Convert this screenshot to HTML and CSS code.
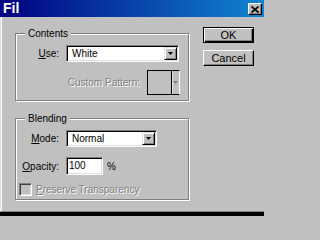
FILE: index.html
```html
<!DOCTYPE html>
<html>
<head>
<meta charset="utf-8">
<link rel="stylesheet" href="styles.css">
</head>
<body>
<div class="window">
  <div class="titlebar">
    <span class="title">Fil</span>
    <span class="close"><svg width="8" height="7" viewBox="0 0 8 7"><path d="M0.5 0.5L7.5 6.5M7.5 0.5L0.5 6.5" stroke="#000" stroke-width="1.7" fill="none"/></svg></span>
  </div>
  <div class="client">
    <div class="groups">
      <section class="group contents">
        <span class="legend">Contents</span>
        <div class="field-row">
          <span class="lbl"><u>U</u>se:</span>
          <div class="combo combo-use">
            <span class="val">White</span>
            <span class="drop"><svg width="5" height="3" viewBox="0 0 5 3"><path d="M0 0H5L2.5 3Z" fill="#000"/></svg></span>
          </div>
        </div>
        <div class="pattern-row">
          <span class="disabled">Custom Pattern:</span>
          <div class="pattern">
            <span class="swatch"></span>
            <span class="pdrop"><svg width="5" height="3" viewBox="0 0 5 3"><path d="M0 0H5L2.5 3Z" fill="#808080"/></svg></span>
          </div>
        </div>
      </section>
      <section class="group blending">
        <span class="legend">Blending</span>
        <div class="field-row">
          <span class="lbl"><u>M</u>ode:</span>
          <div class="combo combo-mode">
            <span class="val">Normal</span>
            <span class="drop"><svg width="5" height="3" viewBox="0 0 5 3"><path d="M0 0H5L2.5 3Z" fill="#000"/></svg></span>
          </div>
        </div>
        <div class="field-row opacity-row">
          <span class="lbl"><u>O</u>pacity:</span>
          <div class="textbox">100</div>
          <span class="pct">%</span>
        </div>
        <div class="check-row">
          <span class="checkbox"></span>
          <span class="disabled"><u>P</u>reserve Transparency</span>
        </div>
      </section>
    </div>
    <div class="buttons">
      <div class="btn default">OK</div>
      <div class="btn">Cancel</div>
    </div>
  </div>
</div>
</body>
</html>
```

FILE: styles.css
```css
* { box-sizing: border-box; }
html, body { margin: 0; padding: 0; }
body {
  background: #c0c0c0;
  font-family: "Liberation Sans", Arial, sans-serif;
  font-size: 10px;
  color: #000;
  width: 264px;
  height: 216px;
  overflow: hidden;
}
.window {
  width: 264px;
  height: 216px;
  display: flex;
  flex-direction: column;
  border-bottom: 4px solid #000;
}
.titlebar {
  flex: none;
  height: 17px;
  display: flex;
  align-items: center;
  padding: 0 2px 0 3px;
  background: linear-gradient(to right, #000080, #1084d0);
}
.title {
  flex: 1;
  color: #fff;
  font-weight: bold;
  font-size: 14px;
  line-height: 17px;
}
.close {
  width: 14px;
  height: 12px;
  margin-top: 1px;
  display: flex;
  align-items: center;
  justify-content: center;
  background: #c0c0c0;
  border: 1px solid;
  border-color: #fff #000 #000 #fff;
  box-shadow: inset -1px -1px #808080;
}
.client {
  flex: 1;
  display: flex;
  align-items: flex-start;
  padding: 10px 0 0 14px;
  border-left: 1px solid #dfdfdf;
  border-bottom: 1px solid #808080;
  box-shadow: inset 1px 0 #fff;
}
.groups {
  width: 175px;
  padding-top: 6px;
  display: flex;
  flex-direction: column;
  gap: 17px;
}
.group {
  position: relative;
  width: 174px;
  border: 1px solid #808080;
  box-shadow: inset 1px 1px #fff, 1px 1px #fff;
}
.legend {
  position: absolute;
  top: -7px;
  left: 9px;
  padding: 0 3px;
  line-height: 13px;
  background: #c0c0c0;
}
.contents { height: 68px; padding: 11px 8px 0 0; }
.blending { height: 82px; padding: 11px 0 0 0; }
.field-row {
  display: flex;
  align-items: center;
}
.lbl {
  width: 43px;
  margin-right: 7px;
  text-align: right;
}
.combo {
  display: flex;
  align-items: center;
  height: 17px;
  padding: 1px;
  background: #fff;
  border: 1px solid;
  border-color: #808080 #fff #fff #808080;
  box-shadow: inset 1px 1px #000, inset -1px -1px #dfdfdf;
}
.combo-use { width: 113px; }
.combo-mode { width: 91px; }
.val {
  flex: 1;
  padding-left: 4px;
}
.drop {
  width: 13px;
  height: 13px;
  display: flex;
  align-items: center;
  justify-content: center;
  background: #c0c0c0;
  border: 1px solid;
  border-color: #dfdfdf #000 #000 #dfdfdf;
  box-shadow: inset 1px 1px #fff, inset -1px -1px #808080;
}
.pattern-row {
  margin-top: 8px;
  display: flex;
  align-items: center;
  justify-content: flex-end;
}
.pattern-row .disabled { margin-right: 7px; }
.disabled {
  color: #808080;
  text-shadow: 1px 1px #fff;
}
.pattern {
  width: 33px;
  height: 25px;
  display: flex;
  border: 1px solid #000;
  border-right-color: #fff;
}
.swatch { flex: 1; }
.pdrop {
  width: 8px;
  display: flex;
  align-items: center;
  justify-content: center;
  border-left: 1px solid #000;
  box-shadow: inset 1px 0 #dfdfdf;
}
.opacity-row { margin-top: 10px; }
.textbox {
  width: 37px;
  height: 18px;
  padding: 1px 0 0 2px;
  line-height: 14px;
  background: #fff;
  border: 1px solid;
  border-color: #808080 #fff #fff #808080;
  box-shadow: inset 1px 1px #000, inset -1px -1px #dfdfdf;
}
.pct { margin-left: 4px; }
.check-row {
  margin-top: 8px;
  padding-left: 3px;
  display: flex;
  align-items: center;
}
.checkbox {
  width: 13px;
  height: 13px;
  margin-right: 4px;
  background: #c0c0c0;
  border: 1px solid;
  border-color: #808080 #fff #fff #808080;
  box-shadow: inset 1px 1px #404040, inset -1px -1px #dfdfdf;
}
.buttons {
  margin-left: 13px;
  display: flex;
  flex-direction: column;
  gap: 7px;
}
.btn {
  width: 51px;
  height: 16px;
  display: flex;
  align-items: center;
  justify-content: center;
  font-size: 11px;
  border: 1px solid;
  border-color: #fff #000 #000 #fff;
  box-shadow: inset -1px -1px #808080;
}
.btn.default {
  border-color: #000;
  box-shadow: inset 1px 1px #fff, inset -1px -1px #000, inset -2px -2px #808080;
}
```
